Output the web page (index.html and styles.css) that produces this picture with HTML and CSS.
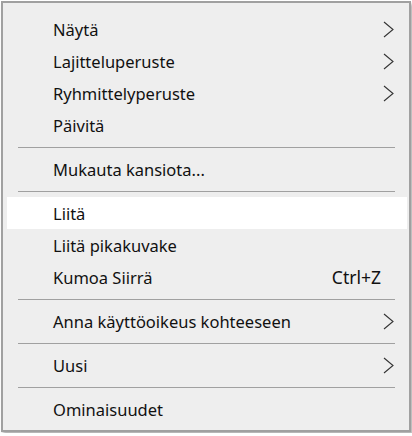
FILE: index.html
```html
<!DOCTYPE html>
<html lang="fi">
<head>
  <meta charset="UTF-8">
  <meta name="viewport" content="width=device-width, initial-scale=1.0">
  <title>Pikavalikko</title>
  <link rel="stylesheet" href="styles.css">
</head>
<body>
  <div class="menu">
    <div class="item">
      <span class="label">Näytä</span>
      <span class="arrow"><svg width="11" height="17" viewBox="0 0 11 17"><polyline points="1,1 10,8.5 1,16" /></svg></span>
    </div>
    <div class="item">
      <span class="label">Lajitteluperuste</span>
      <span class="arrow"><svg width="11" height="17" viewBox="0 0 11 17"><polyline points="1,1 10,8.5 1,16" /></svg></span>
    </div>
    <div class="item">
      <span class="label">Ryhmittelyperuste</span>
      <span class="arrow"><svg width="11" height="17" viewBox="0 0 11 17"><polyline points="1,1 10,8.5 1,16" /></svg></span>
    </div>
    <div class="item">
      <span class="label">Päivitä</span>
      <span class="arrow"></span>
    </div>
    <div class="separator"></div>
    <div class="item">
      <span class="label">Mukauta kansiota...</span>
      <span class="arrow"></span>
    </div>
    <div class="separator"></div>
    <div class="item active">
      <span class="label">Liitä</span>
      <span class="arrow"></span>
    </div>
    <div class="item">
      <span class="label">Liitä pikakuvake</span>
      <span class="arrow"></span>
    </div>
    <div class="item">
      <span class="label">Kumoa Siirrä</span>
      <span class="shortcut">Ctrl+Z</span>
      <span class="arrow"></span>
    </div>
    <div class="separator"></div>
    <div class="item">
      <span class="label">Anna käyttöoikeus kohteeseen</span>
      <span class="arrow"><svg width="11" height="17" viewBox="0 0 11 17"><polyline points="1,1 10,8.5 1,16" /></svg></span>
    </div>
    <div class="separator"></div>
    <div class="item">
      <span class="label">Uusi</span>
      <span class="arrow"><svg width="11" height="17" viewBox="0 0 11 17"><polyline points="1,1 10,8.5 1,16" /></svg></span>
    </div>
    <div class="separator"></div>
    <div class="item">
      <span class="label">Ominaisuudet</span>
      <span class="arrow"></span>
    </div>
  </div>
</body>
</html>
```

FILE: styles.css
```css
body {
  margin: 0;
  background: #fff;
  font-family: 'Noto Sans', 'Open Sans', sans-serif;
}
.menu {
  box-sizing: border-box;
  width: 410px;
  margin: 1px;
  padding: 10px 2px 5px 4px;
  background: #eeeeee;
  border: 2px solid #a0a0a0;
  box-shadow: 2px 3px 3px rgba(0,0,0,0.3);
}
.item {
  display: flex;
  align-items: center;
  height: 32px;
  padding-left: 46px;
  font-size: 16.5px;
  color: #111;
}
.item.active {
  background: #fff;
}
.label {
  flex: 1;
  white-space: nowrap;
}
.shortcut {
  white-space: nowrap;
  font-size: 17.5px;
}
.arrow {
  width: 11px;
  height: 17px;
  margin: 0 13px 0 2px;
}
.arrow svg {
  display: block;
}
.arrow polyline {
  fill: none;
  stroke: #333;
  stroke-width: 1.1;
}
.separator {
  margin: 6px 12px 5px 11px;
  border-top: 1px solid #a0a0a0;
}
```
